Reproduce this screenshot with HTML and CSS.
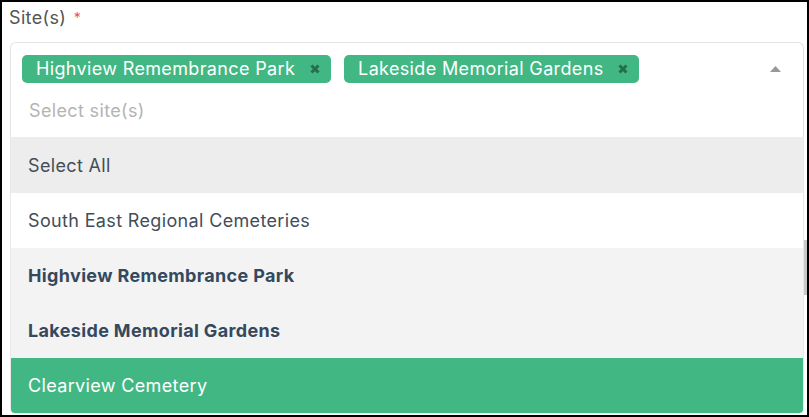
FILE: index.html
```html
<!DOCTYPE html>
<html lang="en">
<head>
<meta charset="utf-8">
<title>Site(s) select</title>
<link rel="stylesheet" href="styles.css">
</head>
<body>
<div class="frame">
  <div class="label">Site(s) <span class="req">*</span></div>
  <div class="ms">
    <div class="ms-tags">
      <div class="row">
        <div class="tags">
          <span class="tag"><span class="tag-text">Highview Remembrance Park</span>
            <svg class="tag-x" viewBox="0 0 10 10"><path d="M1.5 1.5 L8.5 8.5 M8.5 1.5 L1.5 8.5" /></svg>
          </span>
          <span class="tag"><span class="tag-text">Lakeside Memorial Gardens</span>
            <svg class="tag-x" viewBox="0 0 10 10"><path d="M1.5 1.5 L8.5 8.5 M8.5 1.5 L1.5 8.5" /></svg>
          </span>
        </div>
        <svg class="caret" viewBox="0 0 11 6"><path d="M0 6 L5.5 0 L11 6 Z" /></svg>
      </div>
      <div class="placeholder">Select site(s)</div>
    </div>
    <div class="dropdown">
      <div class="opt opt-group">Select All</div>
      <div class="opt">South East Regional Cemeteries</div>
      <div class="opt opt-selected">Highview Remembrance Park</div>
      <div class="opt opt-selected">Lakeside Memorial Gardens</div>
      <div class="opt opt-highlight">Clearview Cemetery</div>
    </div>
  </div>
  <div class="page-scroll"></div>
</div>
</body>
</html>
```
FILE: styles.css
```css
html, body {
  margin: 0;
  padding: 0;
  background: #fff;
}

.frame {
  width: 809px;
  height: 417px;
  box-sizing: border-box;
  border: 2px solid #000;
  background: #fff;
  position: relative;
  overflow: hidden;
  font-family: Inter, "Open Sans", "Liberation Sans", sans-serif;
  font-size: 18px;
  letter-spacing: 0.35px;
}

.label {
  padding: 4px 0 0 7px;
  line-height: 24px;
  color: #555;
  margin-bottom: 12px;
}

.req {
  color: #e8506a;
  font-size: 14px;
  vertical-align: top;
  margin-left: 2px;
}

.ms {
  margin-left: 8px;
  width: 794px;
}

.ms-tags {
  border: 1px solid #e3e3e3;
  border-bottom: none;
  border-radius: 6px 6px 0 0;
  padding: 12px 22px 14px 11px;
}

.row {
  display: flex;
  align-items: center;
}

.tags {
  display: flex;
  gap: 13px;
  flex: 1;
}

.tag {
  display: flex;
  align-items: center;
  height: 28px;
  line-height: 28px;
  padding: 0 11px 0 14px;
  background: #41b883;
  color: #fff;
  border-radius: 5px;
}

.tag-x {
  width: 10px;
  height: 10px;
  margin-left: 15px;
  stroke: #266d4d;
  stroke-width: 3;
  fill: none;
}

.caret {
  width: 11px;
  height: 6px;
  fill: #999;
}

.placeholder {
  margin-top: 16px;
  line-height: 24px;
  color: #b4b4b4;
  padding-left: 7px;
}

.dropdown {
  border: 1px solid #e8e8e8;
  border-top: none;
  border-radius: 0 0 5px 5px;
  overflow: hidden;
}

.opt {
  height: 55px;
  display: flex;
  align-items: center;
  padding-left: 17px;
  color: #434d58;
  background: #fff;
}

.opt-group {
  height: 56px;
  background: #ededed;
}

.opt-selected {
  background: #f3f3f3;
  color: #35495e;
  font-weight: 700;
}

.opt-highlight {
  background: #41b883;
  color: #fff;
}

.page-scroll {
  position: absolute;
  left: 802px;
  top: 238px;
  width: 3px;
  height: 55px;
  background: #c8c8c8;
}
```
